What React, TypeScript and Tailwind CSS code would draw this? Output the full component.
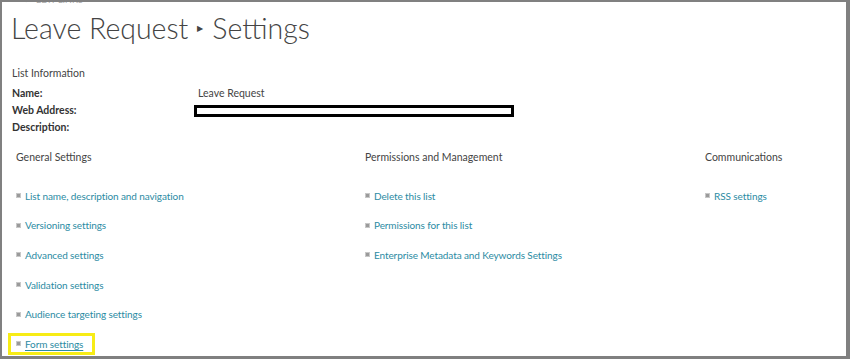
import React from "react";

const linkCls = "text-[#2b8ba3] text-[10px] tracking-[-0.1px] leading-none whitespace-nowrap";

function Item({ label, highlight }: { label: string; highlight?: boolean }) {
  if (highlight) {
    return (
      <div className="h-[29.6px] flex items-center shrink-0">
        <div className="-ml-[8px] border-[3px] border-[#f7ec16] h-[22px] w-[87px] flex items-center pl-[5px] gap-[4px] shrink-0">
          <span className="w-[3px] h-[3px] bg-[#9a9a9a] border border-[#c8c8c8] box-content shrink-0" />
          <span className={linkCls + " underline underline-offset-2"}>{label}</span>
        </div>
      </div>
    );
  }
  return (
    <div className="h-[29.6px] flex items-center gap-[4px] shrink-0">
      <span className="w-[3px] h-[3px] bg-[#9a9a9a] border border-[#c8c8c8] box-content shrink-0" />
      <span className={linkCls}>{label}</span>
    </div>
  );
}

function Column({ title, items, w }: { title: string; items: { label: string; highlight?: boolean }[]; w: string }) {
  return (
    <div className={"flex flex-col shrink-0 " + w}>
      <div className="text-[10.5px] text-[#444] h-[24px] flex items-center whitespace-nowrap shrink-0">{title}</div>
      <div className="h-[11px] shrink-0" />
      {items.map((it) => (
        <Item key={it.label} {...it} />
      ))}
    </div>
  );
}

export default function App() {
  return (
    <div
      className="w-[850px] h-[360px] overflow-hidden bg-white"
      style={{ fontFamily: 'Lato, "Liberation Sans", sans-serif' }}
    >
      <div className="w-[850px] h-[359px] border-t-[2px] border-l-[2px] border-r-[4px] border-b-[3px] border-[#808080] overflow-hidden flex flex-col">
        <div className="h-0 relative overflow-visible shrink-0">
          <div className="absolute left-[18px] -top-[7px] flex items-center gap-[8px] text-[9px] leading-none text-[#aaa]">
            <span>✎</span>
            <span>EDIT LINKS</span>
          </div>
        </div>
        <div className="pl-[9px] h-[52px] flex items-center text-[28.5px] font-light text-[#444] shrink-0">
          <span>Leave Request</span>
          <span className="mx-[9px] text-[8px] text-[#444]">▶</span>
          <span>Settings</span>
        </div>
        <div className="pl-[10px] text-[10.5px] text-[#444] shrink-0">
          <div className="h-[17px] mt-[11px] flex items-center">List Information</div>
          <div className="h-[4px]" />
          <div className="flex h-[16px] items-center">
            <div className="w-[186px] font-bold text-[#333]">Name:</div>
            <div>Leave Request</div>
          </div>
          <div className="flex h-[17px] items-center">
            <div className="w-[182px] font-bold text-[#333]">Web Address:</div>
            <div className="w-[320px] h-[12px] border-[3px] border-black bg-white" />
          </div>
          <div className="flex h-[17px] items-center">
            <div className="font-bold text-[#333]">Description:</div>
          </div>
        </div>
        <div className="flex pl-[14px] mt-[10px] shrink-0">
          <Column
            w="w-[349px]"
            title="General Settings"
            items={[
              { label: "List name, description and navigation" },
              { label: "Versioning settings" },
              { label: "Advanced settings" },
              { label: "Validation settings" },
              { label: "Audience targeting settings" },
              { label: "Form settings", highlight: true },
            ]}
          />
          <Column
            w="w-[340px]"
            title="Permissions and Management"
            items={[
              { label: "Delete this list" },
              { label: "Permissions for this list" },
              { label: "Enterprise Metadata and Keywords Settings" },
            ]}
          />
          <Column w="w-[140px]" title="Communications" items={[{ label: "RSS settings" }]} />
        </div>
      </div>
    </div>
  );
}
